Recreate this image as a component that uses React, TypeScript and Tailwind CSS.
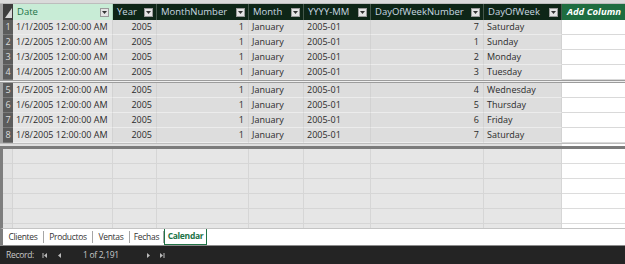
import React from 'react';

const cols = [
  { name: 'Date', w: 'w-[100px]', num: false },
  { name: 'Year', w: 'w-[44px]', num: true },
  { name: 'MonthNumber', w: 'w-[92px]', num: true },
  { name: 'Month', w: 'w-[55px]', num: false },
  { name: 'YYYY-MM', w: 'w-[67px]', num: false },
  { name: 'DayOfWeekNumber', w: 'w-[113px]', num: true },
  { name: 'DayOfWeek', w: 'w-[78px]', num: false },
];

const days = ['Saturday', 'Sunday', 'Monday', 'Tuesday', 'Wednesday', 'Thursday', 'Friday', 'Saturday'];
const dayNums = [7, 1, 2, 3, 4, 5, 6, 7];

const rows = days.map((d, i) => [
  `1/${i + 1}/2005 12:00:00 AM`,
  '2005',
  '1',
  'January',
  '2005-01',
  String(dayNums[i]),
  d,
]);

function Dropdown() {
  return (
    <span className="ml-auto mr-[3px] flex h-[9px] w-[9px] shrink-0 items-center justify-center border border-[#9a9a9a] bg-[#e4e4e4]">
      <svg width="5" height="3" viewBox="0 0 5 3">
        <path d="M0 0h5L2.5 3z" fill="#333" />
      </svg>
    </span>
  );
}

function DataRow({ row, n }: { row: string[]; n: number }) {
  return (
    <div className="flex h-[15px]">
      <div className="w-[3px] bg-[#a3a3a3]" />
      <div className="flex w-[10px] items-center justify-center border-b border-[#7a7a7a] bg-[#5c5c5c] text-[9px] text-[#dcdcdc]">
        {n}
      </div>
      {cols.map((c, j) => (
        <div
          key={c.name}
          className={`${c.w} flex items-center overflow-hidden whitespace-nowrap border-b border-r border-b-[#ececec] border-r-[#d2d2d2] ${
            c.num ? 'justify-end pr-[4px]' : 'justify-start pl-[3px]'
          } ${j === 0 ? 'bg-[#e4e4e4]' : 'bg-[#dddddd]'} text-[#2b2b2b]`}
        >
          {row[j]}
        </div>
      ))}
      <div className="flex-1 border-b border-[#d9d9d9] bg-white" />
    </div>
  );
}

function EmptyRow() {
  return (
    <div className="flex h-[15px] shrink-0">
      <div className="w-[10px] border-b border-r border-[#d4d4d4] bg-[#e2e2e2]" />
      {cols.map((c) => (
        <div key={c.name} className={`${c.w} border-b border-r border-[#d6d6d6] bg-[#e6e6e6]`} />
      ))}
      <div className="flex-1 border-b border-[#dcdcdc] bg-white" />
    </div>
  );
}

function NavIcon({ kind }: { kind: 'first' | 'prev' | 'next' | 'last' }) {
  return (
    <svg width="6" height="5" viewBox="0 0 6 5">
      {kind === 'first' && (
        <>
          <rect x="0.5" y="0" width="1" height="5" fill="#bbb" />
          <path d="M5 0v5L2 2.5z" fill="#bbb" />
        </>
      )}
      {kind === 'prev' && <path d="M4 0v5L1 2.5z" fill="#bbb" />}
      {kind === 'next' && <path d="M2 0v5L5 2.5z" fill="#bbb" />}
      {kind === 'last' && (
        <>
          <path d="M1 0v5L4 2.5z" fill="#bbb" />
          <rect x="4.5" y="0" width="1" height="5" fill="#bbb" />
        </>
      )}
    </svg>
  );
}

export default function App() {
  const tabs = [
    { t: 'Clientes', w: 'w-[41px]' },
    { t: 'Productos', w: 'w-[49px]' },
    { t: 'Ventas', w: 'w-[37px]' },
    { t: 'Fechas', w: 'w-[34px]' },
  ];

  return (
    <div
      className="flex h-[264px] w-[625px] flex-col overflow-hidden bg-white text-[9px]"
      style={{ fontFamily: '"Open Sans", "Noto Sans", sans-serif' }}
    >
      {/* top strip */}
      <div className="h-[4px] border-b border-[#bdbdbd] bg-[#dadada]" />

      {/* Header */}
      <div className="flex h-[16px]">
        <div className="w-[3px] bg-[#a3a3a3]" />
        <div className="relative w-[10px] bg-[#3d3d3d]">
          <svg className="absolute bottom-[2px] right-[1px]" width="7" height="10" viewBox="0 0 7 10">
            <path d="M7 0v10H0z" fill="#d8d8d8" />
          </svg>
        </div>
        {cols.map((c, j) => (
          <div
            key={c.name}
            className={`${c.w} flex items-center overflow-hidden whitespace-nowrap border-r pl-[4px] text-[9.5px] ${
              j === 0
                ? 'border-[#a9d8bc] bg-[#c8ecd6] text-[#217346]'
                : 'border-[#44574b] bg-[#0e2617] text-[#cad8e2]'
            }`}
          >
            <span>{c.name}</span>
            <Dropdown />
          </div>
        ))}
        <div className="flex flex-1 items-center whitespace-nowrap bg-[#1e6d40] pl-[5px] text-[9.5px] font-bold italic text-white">
          Add Column
        </div>
      </div>

      {rows.slice(0, 4).map((r, i) => (
        <DataRow key={i} row={r} n={i + 1} />
      ))}

      {/* frozen split */}
      <div className="h-[3px] border-y border-[#9c9c9c] bg-[#efefef]" />

      {rows.slice(4).map((r, i) => (
        <DataRow key={i + 4} row={r} n={i + 5} />
      ))}

      {/* pane divider */}
      <div className="flex h-[3px]">
        <div className="w-[562px] border-t border-[#bdbdbd] bg-[#dedede]" />
        <div className="flex-1 border-t border-[#bdbdbd] bg-white" />
      </div>
      <div className="h-[3px] bg-[#7b7b7b]" />

      {/* lower pane */}
      <div className="flex h-[79px] border-l-[3px] border-[#7d7d7d]">
        <div className="flex flex-1 flex-col overflow-hidden">
          {[0, 1, 2, 3, 4, 5].map((i) => (
            <EmptyRow key={i} />
          ))}
        </div>
      </div>

      {/* tabs */}
      <div className="flex h-[17px] items-stretch border-l-[3px] border-t border-[#7d7d7d] border-t-[#c4c4c4] bg-white text-[8.5px] tracking-[-0.3px] text-[#333]">
        {tabs.map((t) => (
          <div key={t.t} className={`${t.w} my-[2px] flex items-center justify-center border-r border-[#a6a6a6]`}>
            {t.t}
          </div>
        ))}
        <div className="flex w-[43px] items-center justify-center border-x border-b border-[#217346] font-bold text-[#217346]">
          Calendar
        </div>
      </div>

      {/* record bar */}
      <div className="flex h-[19px] items-center whitespace-nowrap border-t border-[#8c8c8c] bg-[#242424] pl-[6px] text-[8.5px] tracking-[-0.3px] text-[#c8c8c8]">
        <span className="w-[30px]">Record:</span>
        <span className="ml-[6px]">
          <NavIcon kind="first" />
        </span>
        <span className="ml-[9px]">
          <NavIcon kind="prev" />
        </span>
        <span className="ml-[20px] w-[36px]">1 of 2,191</span>
        <span className="ml-[26px]">
          <NavIcon kind="next" />
        </span>
        <span className="ml-[8px]">
          <NavIcon kind="last" />
        </span>
      </div>
    </div>
  );
}
